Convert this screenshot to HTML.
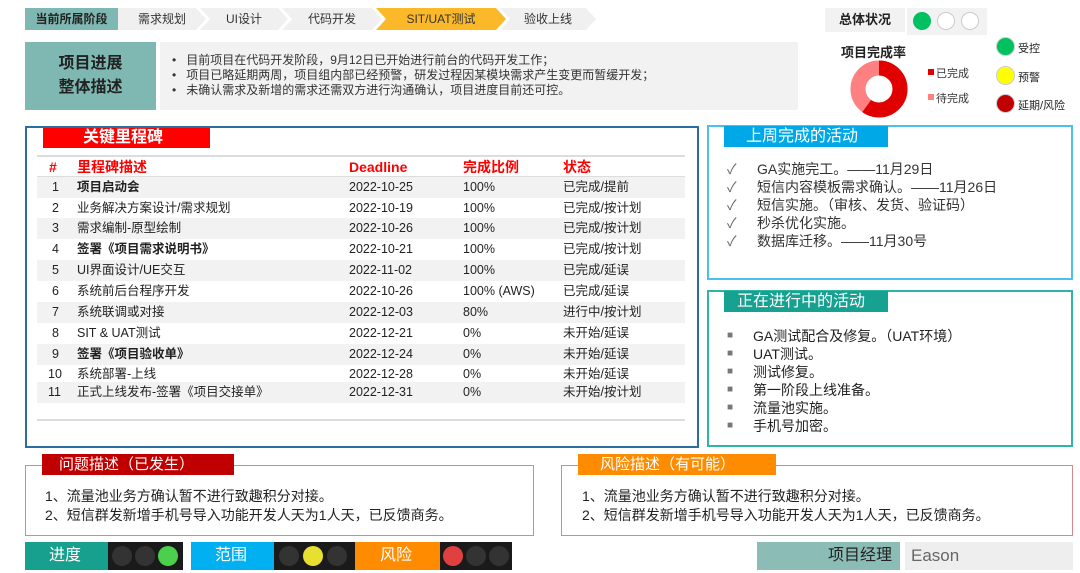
<!DOCTYPE html><html><head><meta charset="utf-8"><style>
*{margin:0;padding:0;box-sizing:border-box}
body{width:1080px;height:573px;background:#fff;position:relative;overflow:hidden;font-family:"Liberation Sans","Noto Sans CJK SC",sans-serif;color:#222}
.a{position:absolute}
.chev{position:absolute;top:8px;height:22px;font-size:12px;line-height:22px;text-align:center;color:#333;clip-path:polygon(0 0,calc(100% - 10px) 0,100% 50%,calc(100% - 10px) 100%,0 100%,10px 50%)}
.row{position:absolute;left:37px;width:648px;height:20.5px;font-size:12.5px;line-height:20.5px}
.row span{position:absolute}
.lt{position:absolute;font-size:14px;color:#333}
.tl{position:absolute;width:20px;height:20px;border-radius:50%;top:4px}
</style></head><body>
<div class="a" style="left:25px;top:8px;width:93px;height:22px;background:#7fb8b3;font-size:12px;font-weight:bold;line-height:22px;text-align:center">当前所属阶段</div>
<div class="chev" style="left:118px;width:88px;background:#f0f0f0;clip-path:polygon(0 0,calc(100% - 10px) 0,100% 50%,calc(100% - 10px) 100%,0 100%)">需求规划</div>
<div class="chev" style="left:200px;width:88px;background:#f0f0f0">UI设计</div>
<div class="chev" style="left:282px;width:100px;background:#f0f0f0">代码开发</div>
<div class="chev" style="left:376px;width:130px;background:#fbb829">SIT/UAT测试</div>
<div class="chev" style="left:500px;width:96px;background:#f0f0f0">验收上线</div>

<div class="a" style="left:25px;top:42px;width:131px;height:68px;background:#7fb8b3;font-size:16px;font-weight:bold;text-align:center;line-height:24px;padding-top:10px">项目进展<br>整体描述</div>
<div class="a" style="left:160px;top:42px;width:638px;height:68px;background:#f2f2f2;font-size:12px;line-height:15px;padding:11px 0 0 12px;color:#333">
<div>•&nbsp;&nbsp; 目前项目在代码开发阶段，9月12日已开始进行前台的代码开发工作；</div>
<div>•&nbsp;&nbsp; 项目已略延期两周，项目组内部已经预警，研发过程因某模块需求产生变更而暂缓开发；</div>
<div>•&nbsp;&nbsp; 未确认需求及新增的需求还需双方进行沟通确认，项目进度目前还可控。</div></div>

<div class="a" style="left:825px;top:8px;width:80px;height:24px;background:#f2f2f2;font-size:13px;font-weight:bold;line-height:24px;text-align:center">总体状况</div>
<div class="a" style="left:907px;top:8px;width:80px;height:27px;background:#f2f2f2"></div>
<div class="a" style="left:913px;top:12px;width:18px;height:18px;border-radius:50%;background:#00c060"></div>
<div class="a" style="left:937px;top:12px;width:18px;height:18px;border-radius:50%;background:#fff;border:1px solid #ccc"></div>
<div class="a" style="left:961px;top:12px;width:18px;height:18px;border-radius:50%;background:#fff;border:1px solid #ccc"></div>
<div class="a" style="left:841px;top:42px;font-size:13px;font-weight:bold">项目完成率</div>
<svg class="a" style="left:849px;top:59px" width="60" height="60" viewBox="0 0 60 60">
<circle cx="30" cy="30" r="21" fill="none" stroke="#ff8080" stroke-width="15"/>
<circle cx="30" cy="30" r="21" fill="none" stroke="#e00000" stroke-width="15" stroke-dasharray="79 132" transform="rotate(-90 30 30)"/></svg>
<div class="a" style="left:928px;top:69px;width:6px;height:6px;background:#e00000"></div>
<div class="a" style="left:936px;top:65px;font-size:11px;color:#333">已完成</div>
<div class="a" style="left:928px;top:94px;width:6px;height:6px;background:#ff8080"></div>
<div class="a" style="left:936px;top:90px;font-size:11px;color:#333">待完成</div>
<div class="a" style="left:996px;top:37px;width:19px;height:19px;border-radius:50%;background:#00c060;border:1px solid #ccc"></div>
<div class="a" style="left:996px;top:66px;width:19px;height:19px;border-radius:50%;background:#ffff00;border:1px solid #ccc"></div>
<div class="a" style="left:996px;top:94px;width:19px;height:19px;border-radius:50%;background:#c00000;border:1px solid #ccc"></div>
<div class="a" style="left:1018px;top:40px;font-size:11px">受控</div>
<div class="a" style="left:1018px;top:69px;font-size:11px">预警</div>
<div class="a" style="left:1018px;top:97px;font-size:11px">延期/风险</div>

<div class="a" style="left:25px;top:126px;width:674px;height:322px;border:2px solid #2a6fa0"></div>
<div class="a" style="left:43px;top:128px;width:167px;height:20px;background:#ff0000;color:#fff;font-size:16px;font-weight:bold;line-height:20px;padding-left:40px">关键里程碑</div>
<div class="a" style="left:37px;top:155px;width:648px;height:2px;background:#ddd"></div>
<div class="row" style="top:157px;color:#f00;font-weight:bold;font-size:14px"><span style="left:12px">#</span><span style="left:40px">里程碑描述</span><span style="left:312px">Deadline</span><span style="left:426px">完成比例</span><span style="left:526px">状态</span></div>
<div class="a" style="left:37px;top:176px;width:648px;height:2px;background:#ddd"></div>
<div class="row" style="top:177px;background:#f2f2f2"><span style="left:15px">1</span><span style="left:40px;font-weight:bold">项目启动会</span><span style="left:312px">2022-10-25</span><span style="left:426px">100%</span><span style="left:526px">已完成/提前</span></div>
<div class="row" style="top:197.5px"><span style="left:15px">2</span><span style="left:40px">业务解决方案设计/需求规划</span><span style="left:312px">2022-10-19</span><span style="left:426px">100%</span><span style="left:526px">已完成/按计划</span></div>
<div class="row" style="top:218px;background:#f2f2f2"><span style="left:15px">3</span><span style="left:40px">需求编制-原型绘制</span><span style="left:312px">2022-10-26</span><span style="left:426px">100%</span><span style="left:526px">已完成/按计划</span></div>
<div class="row" style="top:239px"><span style="left:15px">4</span><span style="left:40px;font-weight:bold">签署《项目需求说明书》</span><span style="left:312px">2022-10-21</span><span style="left:426px">100%</span><span style="left:526px">已完成/按计划</span></div>
<div class="row" style="top:260px;background:#f2f2f2"><span style="left:15px">5</span><span style="left:40px">UI界面设计/UE交互</span><span style="left:312px">2022-11-02</span><span style="left:426px">100%</span><span style="left:526px">已完成/延误</span></div>
<div class="row" style="top:281px"><span style="left:15px">6</span><span style="left:40px">系统前后台程序开发</span><span style="left:312px">2022-10-26</span><span style="left:426px">100% (AWS)</span><span style="left:526px">已完成/延误</span></div>
<div class="row" style="top:302px;background:#f2f2f2"><span style="left:15px">7</span><span style="left:40px">系统联调或对接</span><span style="left:312px">2022-12-03</span><span style="left:426px">80%</span><span style="left:526px">进行中/按计划</span></div>
<div class="row" style="top:323px"><span style="left:15px">8</span><span style="left:40px">SIT &amp; UAT测试</span><span style="left:312px">2022-12-21</span><span style="left:426px">0%</span><span style="left:526px">未开始/延误</span></div>
<div class="row" style="top:344px;background:#f2f2f2"><span style="left:15px">9</span><span style="left:40px;font-weight:bold">签署《项目验收单》</span><span style="left:312px">2022-12-24</span><span style="left:426px">0%</span><span style="left:526px">未开始/延误</span></div>
<div class="row" style="top:364px"><span style="left:11px">10</span><span style="left:40px">系统部署-上线</span><span style="left:312px">2022-12-28</span><span style="left:426px">0%</span><span style="left:526px">未开始/延误</span></div>
<div class="row" style="top:382px;background:#f2f2f2"><span style="left:11px">11</span><span style="left:40px">正式上线发布-签署《项目交接单》</span><span style="left:312px">2022-12-31</span><span style="left:426px">0%</span><span style="left:526px">未开始/按计划</span></div>
<div class="a" style="left:37px;top:419px;width:648px;height:2px;background:#ddd"></div>

<div class="a" style="left:707px;top:125px;width:366px;height:155px;border:2px solid #4cc0ec"></div>
<div class="a" style="left:724px;top:126px;width:164px;height:21px;background:#00a8e8;color:#fff;font-size:16px;line-height:21px;padding-left:22px">上周完成的活动</div>
<div class="lt" style="left:727px;top:160px;line-height:18px;color:#666">✓<br>✓<br>✓<br>✓<br>✓</div>
<div class="lt" style="left:757px;top:160px;line-height:18px">GA实施完工。——11月29日<br>短信内容模板需求确认。——11月26日<br>短信实施。（审核、发货、验证码）<br>秒杀优化实施。<br>数据库迁移。——11月30号</div>

<div class="a" style="left:707px;top:290px;width:366px;height:157px;border:2px solid #2fb5a5"></div>
<div class="a" style="left:724px;top:291px;width:164px;height:21px;background:#17a190;color:#fff;font-size:16px;line-height:21px;padding-left:13px">正在进行中的活动</div>
<div class="lt" style="left:727px;top:327px;line-height:18px;color:#777;font-size:10px"><div style="height:18px">■</div><div style="height:18px">■</div><div style="height:18px">■</div><div style="height:18px">■</div><div style="height:18px">■</div><div style="height:18px">■</div></div>
<div class="lt" style="left:753px;top:327px;line-height:18px;color:#222">GA测试配合及修复。（UAT环境）<br>UAT测试。<br>测试修复。<br>第一阶段上线准备。<br>流量池实施。<br>手机号加密。</div>

<div class="a" style="left:25px;top:465px;width:509px;height:71px;border:1px solid #d9878a"></div>
<div class="a" style="left:42px;top:454px;width:192px;height:21px;background:#c00000;color:#fff;font-size:15px;line-height:21px;padding-left:17px">问题描述（已发生）</div>
<div class="lt" style="left:45px;top:487px;line-height:19px;color:#222">1、流量池业务方确认暂不进行致趣积分对接。<br>2、短信群发新增手机号导入功能开发人天为1人天，已反馈商务。</div>
<div class="a" style="left:561px;top:465px;width:512px;height:71px;border:1px solid #d9878a"></div>
<div class="a" style="left:578px;top:454px;width:198px;height:21px;background:#ff8c00;color:#fff;font-size:15px;line-height:21px;padding-left:22px">风险描述（有可能）</div>
<div class="lt" style="left:582px;top:487px;line-height:19px;color:#222">1、流量池业务方确认暂不进行致趣积分对接。<br>2、短信群发新增手机号导入功能开发人天为1人天，已反馈商务。</div>

<div class="a" style="left:25px;top:542px;width:83px;height:28px;background:#17a08e;color:#fff;font-size:16px;line-height:28px;padding-left:24px">进度</div>
<div class="a" style="left:108px;top:542px;width:75px;height:28px;background:#1a1a1a"><div class="tl" style="left:4px;background:#333"></div><div class="tl" style="left:27px;background:#333"></div><div class="tl" style="left:50px;background:#4ccf4c"></div></div>
<div class="a" style="left:191px;top:542px;width:83px;height:28px;background:#00b0f0;color:#fff;font-size:16px;line-height:28px;padding-left:24px">范围</div>
<div class="a" style="left:274px;top:542px;width:81px;height:28px;background:#1a1a1a"><div class="tl" style="left:5px;background:#333"></div><div class="tl" style="left:29px;background:#e8e030"></div><div class="tl" style="left:53px;background:#333"></div></div>
<div class="a" style="left:355px;top:542px;width:85px;height:28px;background:#ff8c00;color:#fff;font-size:16px;line-height:28px;padding-left:25px">风险</div>
<div class="a" style="left:440px;top:542px;width:72px;height:28px;background:#1a1a1a"><div class="tl" style="left:3px;background:#e04040"></div><div class="tl" style="left:26px;background:#333"></div><div class="tl" style="left:49px;background:#333"></div></div>
<div class="a" style="left:757px;top:542px;width:143px;height:28px;background:#8bbcb5;color:#222;font-size:16px;line-height:28px;text-align:right;padding-right:8px">项目经理</div>
<div class="a" style="left:905px;top:542px;width:168px;height:28px;background:#eee;color:#666;font-size:17px;line-height:28px;padding-left:6px">Eason</div>
</body></html>
